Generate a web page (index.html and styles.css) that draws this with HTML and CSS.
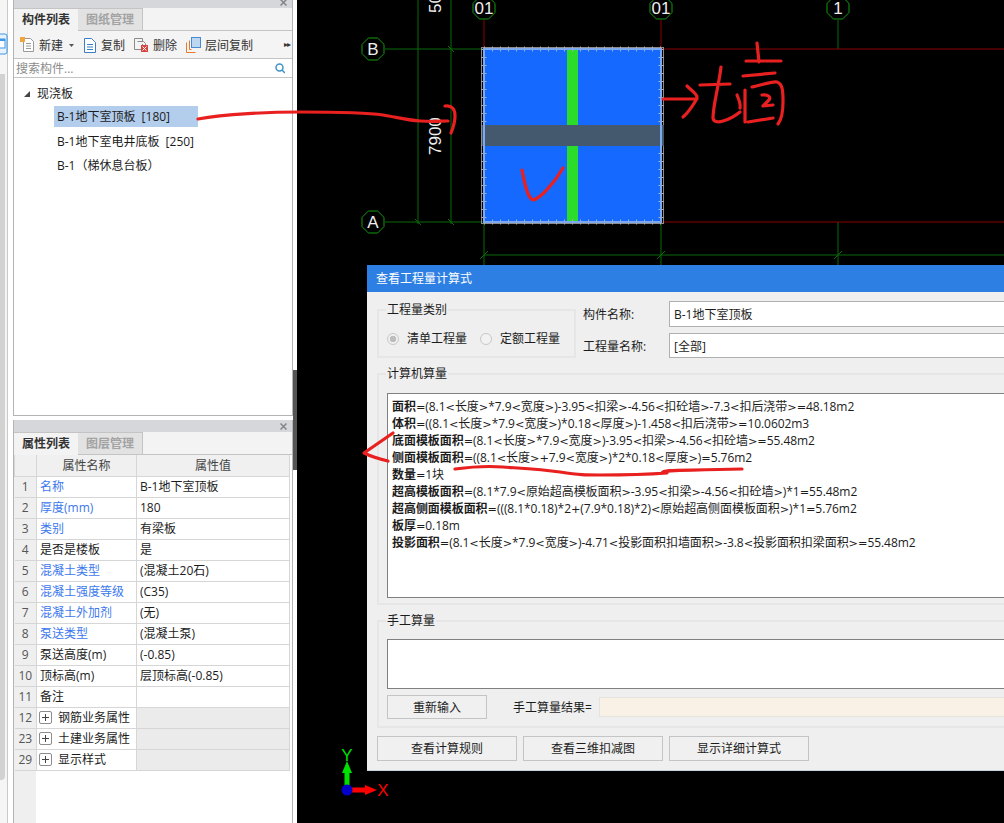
FILE: index.html
```html
<!DOCTYPE html>
<html lang="zh">
<head>
<meta charset="utf-8">
<title>查看工程量计算式</title>
<link rel="stylesheet" href="styles.css">
</head>
<body>
<div class="app">
  <div class="rail">
    <svg class="rail-icon" width="8" height="22" viewBox="0 0 8 22"><rect x="-6" y="1" width="13" height="20" rx="2" class="ri-frame"/><rect x="-2" y="6" width="7" height="9" class="ri-fill"/><rect x="-2" y="6" width="7" height="2" class="ri-bar"/></svg>
    <div class="rail-bar"></div>
  </div>
  <div class="side">
    <section class="panel panel-top">
      <div class="head"><svg class="close" width="7" height="7" viewBox="0 0 7 7"><path d="M.5 .5l6 6M6.500 .5l-6 6"/></svg></div>
      <div class="tabs"><span class="tab on">构件列表</span><span class="tab">图纸管理</span></div>
      <div class="toolbar">
        <span class="tool t-new"><svg width="15" height="16" viewBox="0 0 15 16"><path class="i-page" d="M3.5 1.5h7l3 3v10h-10z"/><path class="i-line" d="M6 6.5h5M6 9h5M6 11.5h5"/><rect class="i-spark" x="0" y="0" width="5" height="5"/></svg>新建<svg class="caret" width="5" height="3" viewBox="0 0 5 3"><path d="M0 0h5L2.500 3z"/></svg></span>
        <span class="tool t-copy"><svg width="12" height="16" viewBox="0 0 12 16"><path class="i-blue" d="M.5 1.500h7l4 4v10h-11z"/><path class="i-blue" d="M3 7.500h6M3 10h6M3 12.500h6"/></svg>复制</span>
        <span class="tool t-del"><svg width="15" height="16" viewBox="0 0 15 16"><path class="i-gray" d="M.5 1.500h8v11h-8z"/><path class="i-gray" d="M3.500 4.500h6l2 2v2"/><rect class="i-red" x="7" y="8" width="7" height="7"/><path class="i-x" d="M8.500 9.500l4 4M12.500 9.500l-4 4"/></svg>删除</span>
        <span class="tool t-floor"><svg width="15" height="16" viewBox="0 0 15 16"><path class="i-orange" d="M.5 15.500v-10M.5 15.500h9M3.500 12.500v-9M3.500 12.500h2"/><rect class="i-bluebox" x="5.500" y=".5" width="9" height="10"/></svg>层间复制</span>
        <span class="more">▸▸</span>
      </div>
      <div class="search"><span>搜索构件...</span><svg width="10" height="11" viewBox="0 0 10 11"><circle class="i-mag" cx="4.500" cy="4.500" r="3.500"/><path class="i-mag" d="M7 7l3 3"/></svg></div>
      <div class="tree">
        <div class="root"><svg class="tri" width="6" height="6" viewBox="0 0 6 6"><path d="M6 0v6H0z"/></svg>现浇板</div>
        <div class="leaf sel">B-1地下室顶板 [180]</div>
        <div class="leaf">B-1地下室电井底板 [250]</div>
        <div class="leaf">B-1（梯休息台板）</div>
      </div>
    </section>
    <section class="panel panel-bottom">
      <div class="head head-b"><svg class="close" width="7" height="7" viewBox="0 0 7 7"><path d="M.5 .5l6 6M6.500 .5l-6 6"/></svg></div>
      <div class="tabs"><span class="tab on">属性列表</span><span class="tab">图层管理</span></div>
      <div class="grid-wrap">
        <table class="props">
          <colgroup><col class="c0"><col class="c1"><col class="c2"></colgroup>
          <thead><tr><th></th><th>属性名称</th><th>属性值</th></tr></thead>
          <tbody>
            <tr><td class="n">1</td><td class="link">名称</td><td>B-1地下室顶板</td></tr>
            <tr><td class="n">2</td><td class="link">厚度(mm)</td><td>180</td></tr>
            <tr><td class="n">3</td><td class="link">类别</td><td>有梁板</td></tr>
            <tr><td class="n">4</td><td>是否是楼板</td><td>是</td></tr>
            <tr><td class="n">5</td><td class="link">混凝土类型</td><td>(混凝土20石)</td></tr>
            <tr><td class="n">6</td><td class="link">混凝土强度等级</td><td>(C35)</td></tr>
            <tr><td class="n">7</td><td class="link">混凝土外加剂</td><td>(无)</td></tr>
            <tr><td class="n">8</td><td class="link">泵送类型</td><td>(混凝土泵)</td></tr>
            <tr><td class="n">9</td><td>泵送高度(m)</td><td>(-0.85)</td></tr>
            <tr><td class="n">10</td><td>顶标高(m)</td><td>层顶标高(-0.85)</td></tr>
            <tr><td class="n">11</td><td>备注</td><td></td></tr>
            <tr class="grp"><td class="n">12</td><td><span class="plus"></span>钢筋业务属性</td><td></td></tr>
            <tr class="grp"><td class="n">23</td><td><span class="plus"></span>土建业务属性</td><td></td></tr>
            <tr class="grp"><td class="n">29</td><td><span class="plus"></span>显示样式</td><td></td></tr>
          </tbody>
        </table>
      </div>
    </section>
  </div>
  <div class="split"></div>
  <main class="canvas">
    <svg class="cad" width="707" height="823" viewBox="297 0 707 823">
      <defs><path id="oct" d="M11 -4.600L11 4.600L4.600 11L-4.600 11L-11 4.600L-11 -4.600L-4.600 -11L4.600 -11Z"/></defs>
      <g class="gl">
        <path d="M418 0V224M451 0V224M385 49H484M385 222H484M484 222V265M661 222V265M838 222V265M838 20V49M484 255H1004"/>
        <path d="M448 46l6 6M415 219l6 6M448 219l6 6M480 259l8 -8M657 259l8 -8M834 259l8 -8"/>
        <use href="#oct" x="373" y="49"/><use href="#oct" x="373" y="222"/>
        <use href="#oct" x="484" y="8"/><use href="#oct" x="661" y="8"/><use href="#oct" x="838" y="8"/>
      </g>
      <path class="rl" d="M484 20V49M661 20V49M661 49H1004M661 222H1004"/>
      <text class="ct" x="373" y="55" text-anchor="middle">B</text>
      <text class="ct" x="373" y="228" text-anchor="middle">A</text>
      <text class="ct" x="484" y="14" text-anchor="middle">01</text>
      <text class="ct" x="661" y="14" text-anchor="middle">01</text>
      <text class="ct" x="838" y="14" text-anchor="middle">1</text>
      <text class="ct" transform="translate(441 155) rotate(-90)">7900</text>
      <text class="ct" transform="translate(441 13) rotate(-90)">5000</text>
      <text class="dim" x="572" y="276" text-anchor="middle">8100</text>
      <text class="dim" x="750" y="276" text-anchor="middle">8100</text>
      <text class="dim" x="927" y="276" text-anchor="middle">8100</text>
      <rect class="slab" x="484" y="49" width="177" height="173"/>
      <rect class="bar-g" x="567" y="49" width="11" height="173"/>
      <rect class="outline" x="481.500" y="47.500" width="182" height="176"/>
      <path class="ticks" d="M484 49H661M484 222H661M484 49V222M661 49V222"/>
      <rect class="bar-s" x="482" y="125" width="182" height="21"/>
      <rect class="sel-edge" x="484" y="49" width="177" height="173"/>
      <path class="ax-g" d="M347 790V772"/><path class="ax-gh" d="M347 761l5 12h-10z"/>
      <path class="ax-r" d="M347 790H366"/><path class="ax-rh" d="M377 790l-12 -5v10z"/>
      <circle class="ax-o" cx="347" cy="790" r="5.500"/>
      <text class="ax-yt" x="347" y="761" text-anchor="middle">Y</text>
      <text class="ax-xt" x="383" y="796" text-anchor="middle">X</text>
    </svg>
    <div class="dialog">
      <div class="d-title">查看工程量计算式</div>
      <div class="d-body">
        <div class="d-top">
          <fieldset class="g g-type">
            <legend>工程量类别</legend>
            <div class="radios">
              <span class="radio"><i class="dot on"></i>清单工程量</span>
              <span class="radio"><i class="dot"></i>定额工程量</span>
            </div>
          </fieldset>
          <div class="fields">
            <div class="field"><label>构件名称:</label><div class="inp">B-1地下室顶板</div></div>
            <div class="field"><label>工程量名称:</label><div class="inp">[全部]</div></div>
          </div>
        </div>
        <fieldset class="g g-calc">
          <legend>计算机算量</legend>
          <div class="formula">
            <div><b>面积</b><i class="m">=</i>(8.1<i class="m">&lt;</i>长度<i class="m">&gt;</i>*7.9<i class="m">&lt;</i>宽度<i class="m">&gt;</i>)-3.95<i class="m">&lt;</i>扣梁<i class="m">&gt;</i>-4.56<i class="m">&lt;</i>扣砼墙<i class="m">&gt;</i>-7.3<i class="m">&lt;</i>扣后浇带<i class="m">&gt;</i><i class="m">=</i>48.18m2</div>
            <div><b>体积</b><i class="m">=</i>((8.1<i class="m">&lt;</i>长度<i class="m">&gt;</i>*7.9<i class="m">&lt;</i>宽度<i class="m">&gt;</i>)*0.18<i class="m">&lt;</i>厚度<i class="m">&gt;</i>)-1.458<i class="m">&lt;</i>扣后浇带<i class="m">&gt;</i><i class="m">=</i>10.0602m3</div>
            <div><b>底面模板面积</b><i class="m">=</i>(8.1<i class="m">&lt;</i>长度<i class="m">&gt;</i>*7.9<i class="m">&lt;</i>宽度<i class="m">&gt;</i>)-3.95<i class="m">&lt;</i>扣梁<i class="m">&gt;</i>-4.56<i class="m">&lt;</i>扣砼墙<i class="m">&gt;</i><i class="m">=</i>55.48m2</div>
            <div><b>侧面模板面积</b><i class="m">=</i>((8.1<i class="m">&lt;</i>长度<i class="m">&gt;</i><i class="m">+</i>7.9<i class="m">&lt;</i>宽度<i class="m">&gt;</i>)*2*0.18<i class="m">&lt;</i>厚度<i class="m">&gt;</i>)<i class="m">=</i>5.76m2</div>
            <div><b>数量</b><i class="m">=</i>1块</div>
            <div><b>超高模板面积</b><i class="m">=</i>(8.1*7.9<i class="m">&lt;</i>原始超高模板面积<i class="m">&gt;</i>-3.95<i class="m">&lt;</i>扣梁<i class="m">&gt;</i>-4.56<i class="m">&lt;</i>扣砼墙<i class="m">&gt;</i>)*1<i class="m">=</i>55.48m2</div>
            <div><b>超高侧面模板面积</b><i class="m">=</i>(((8.1*0.18)*2<i class="m">+</i>(7.9*0.18)*2)<i class="m">&lt;</i>原始超高侧面模板面积<i class="m">&gt;</i>)*1<i class="m">=</i>5.76m2</div>
            <div><b>板厚</b><i class="m">=</i>0.18m</div>
            <div><b>投影面积</b><i class="m">=</i>(8.1<i class="m">&lt;</i>长度<i class="m">&gt;</i>*7.9<i class="m">&lt;</i>宽度<i class="m">&gt;</i>)-4.71<i class="m">&lt;</i>投影面积扣墙面积<i class="m">&gt;</i>-3.8<i class="m">&lt;</i>投影面积扣梁面积<i class="m">&gt;</i><i class="m">=</i>55.48m2</div>
          </div>
        </fieldset>
        <fieldset class="g g-hand">
          <legend>手工算量</legend>
          <div class="hand-box"></div>
          <div class="hand-row">
            <button class="btn btn-re">重新输入</button>
            <span class="hand-label">手工算量结果=</span>
            <div class="hand-res"></div>
          </div>
        </fieldset>
        <div class="d-actions">
          <button class="btn btn-a">查看计算规则</button>
          <button class="btn btn-a">查看三维扣减图</button>
          <button class="btn btn-a">显示详细计算式</button>
        </div>
      </div>
    </div>
  </main>
</div>
<svg class="ink" width="1004" height="823" viewBox="0 0 1004 823">
  <path d="M198 119C225 114 270 112 300 112S370 113 383 115 405 120 420 121 440 121 448 121"/>
  <path d="M445 106C452 105 455 109 455 116S453 128 451 133"/>
  <path d="M522 170C524 180 527 198 533 200 540 199 555 182 563 168"/>
  <path d="M663 99H697M687 86C691 90 697 94 697 97S688 113 683 117"/>
  <path d="M700 85L730 84M721 67C719 85 713 105 713 118 714 126 730 120 740 112M737 95C739 100 741 104 740 108"/>
  <path d="M757 43L759 62M746 61H781M743 76L775 73M752 87C762 85 772 81 777 82 783 84 783 92 783 102S781 120 778 124M745 90V122M748 122L773 118M762 95C768 94 771 97 769 100L763 106 773 105"/>
  <path d="M393 433L364 453C370 456 380 459 388 461"/>
  <path d="M455 469C470 467 490 466 503 467S540 469 560 472 585 475 600 475 640 475 667 473M662 473C664 469 680 471 742 469"/>
</svg>
</body>
</html>
```
FILE: styles.css
```css
* { box-sizing: border-box; }
html, body { margin: 0; padding: 0; background: #000; }
body {
  width: 1004px;
  height: 823px;
  overflow: hidden;
  position: relative;
  font: 12px/17px "Open Sans", "Noto Sans CJK SC", sans-serif;
  color: #1c1c1c;
}
.app { display: flex; width: 1004px; height: 823px; }

/* left rail */
.rail {
  width: 13px;
  flex: none;
  background: #f5f5f5;
  padding-top: 33px;
  display: flex;
  flex-direction: column;
  box-shadow: inset -5px 0 0 #fff, inset -6px 0 0 #c9c9c9;
}
.rail-icon { display: block; }
.ri-frame { fill: #e8f2fc; stroke: #3d96e8; }
.ri-fill { fill: #fff; stroke: #3d96e8; }
.ri-bar { fill: #3d96e8; }
.rail-bar { width: 5px; height: 706px; margin-top: 19px; background: #d2d2d2; border-radius: 0 0 4px 0; }

/* side panels */
.side { width: 280px; flex: none; display: flex; flex-direction: column; background: #fff; }
.panel { border: 1px solid #b4b4b4; border-top: 0; display: flex; flex-direction: column; background: #fff; }
.panel-top { height: 416px; }
.panel-bottom { margin-top: 4px; flex: 1; border-bottom: 0; min-height: 0; }
.head { height: 8px; background: #d5d7da; position: relative; overflow: hidden; flex: none; }
.head-b { height: 12px; }
.close { position: absolute; right: 5px; top: -1px; display: block; }
.head-b .close { top: 3px; }
.close path { fill: none; stroke: #858585; stroke-width: 1.500; }
.tabs { display: flex; height: 23px; flex: none; background: #f3f3f3; border-bottom: 1px solid #c4c4c4; }
.tab {
  width: 65px;
  text-align: center;
  font-weight: 700;
  line-height: 22px;
  color: #a3a3a3;
  background: #e2e2e2;
  border-top: 1px solid #c4c4c4;
  border-right: 1px solid #c4c4c4;
  height: 22px;
}
.tab.on { width: 64px; background: #f3f3f3; color: #333; border-right: 0; box-shadow: 0 1px 0 #f3f3f3; }

.toolbar { height: 28px; flex: none; display: flex; align-items: center; background: #f4f4f4; border-bottom: 1px solid #c4c4c4; padding-left: 6px; color: #333; position: relative; }
.tool { display: flex; align-items: center; line-height: 19px; padding-top: 1px; }
.tool svg { margin: -1px 4px 0 0; flex: none; }
.t-copy svg { margin-right: 5px; }
.t-new { width: 64px; }
.t-copy { width: 50px; }
.t-del { width: 52px; }
.tool .caret { margin: 0 0 0 6px; fill: #555; }
.more { position: absolute; right: 2px; top: 5px; font: 8px/17px "DejaVu Sans", sans-serif; color: #333; letter-spacing: -1px; }
.i-page { fill: #fff; stroke: #9a9a9a; }
.i-line { fill: none; stroke: #9a9a9a; }
.i-spark { fill: #f2a53b; }
.i-blue { fill: #fff; stroke: #3a7fc8; }
.i-gray { fill: #f4f4f4; stroke: #8a8a8a; }
.i-red { fill: #d8433f; }
.i-x { stroke: #fff; fill: none; }
.i-orange { fill: none; stroke: #e8792c; }
.i-bluebox { fill: #bcd7f2; stroke: #4a8ad0; }
.i-mag { fill: none; stroke: #3f93c9; stroke-width: 1.500; }

.search { height: 19px; flex: none; display: flex; align-items: center; justify-content: space-between; padding: 0 7px 0 2px; border-bottom: 1px solid #c4c4c4; color: #8c8c8c; background: #fff; }
.tree { flex: 1; padding-top: 7px; }
.root { display: flex; align-items: center; height: 17px; padding-left: 10px; margin-bottom: 4px; }
.tri { margin-right: 7px; fill: #444; }
.leaf { height: 24.500px; line-height: 21px; padding-left: 3px; margin-left: 40px; word-spacing: 3px; }
.leaf.sel { width: 144px; height: 21px; margin-bottom: 3.500px; background: #b3cdec; }

/* property grid */
.grid-wrap { flex: 1; background: linear-gradient(90deg, #efefef 22px, #fff 22px); padding-right: 3px; }
.props { border-collapse: collapse; table-layout: fixed; width: 275px; }
.c0 { width: 22px; }
.c1 { width: 100px; }
.c2 { width: 153px; }
.props th, .props td { height: 21px; padding: 0 0 0 3px; border: 1px solid #d6d6d6; font-weight: 400; white-space: nowrap; overflow: hidden; line-height: 17px; }
.props th { background: #f0f0f0; text-align: center; padding: 0; color: #444; border-top: 0; }
.props .n { background: #efefef; text-align: center; padding: 0; color: #555; border-left: 0; }
.link { color: #3c78ee; }
.grp td:last-child { background: #ebebeb; }
.plus { display: inline-block; width: 13px; height: 13px; margin: 0 6px 0 -1px; vertical-align: -2px; border: 1px solid #8d8d8d; border-radius: 2px; background: linear-gradient(#444, #444) center / 7px 1px no-repeat, linear-gradient(#444, #444) center / 1px 7px no-repeat, #fff; }

.split { width: 4px; flex: none; background: #fff; position: relative; }
.split::after { content: ""; position: absolute; left: 0; top: 370px; width: 4px; height: 100px; background: #555; }

/* canvas */
.canvas { flex: 1; position: relative; background: #000; overflow: hidden; }
.cad { position: absolute; left: 0; top: 0; }
.gl { fill: none; stroke: #0b6b0b; }
.gl use { stroke: #129a12; }
.rl { fill: none; stroke: #8b0000; }
.ct { fill: #eee; font: 17px "Liberation Sans", sans-serif; }
.dim { fill: #ddd; font: 15px "Liberation Sans", sans-serif; }
.slab { fill: #1569ff; }
.bar-g { fill: #2bdc2b; }
.bar-s { fill: #44586e; }
.sel-edge { fill: none; stroke: #7fa9ee; stroke-width: 2; }
.outline { fill: none; stroke: #8c8c8c; }
.ticks { fill: none; stroke: #b0b0b0; stroke-width: 5; stroke-dasharray: 1 7; }
.ax-g { stroke: #00e000; stroke-width: 5; fill: none; }
.ax-gh { fill: #00e000; }
.ax-r { stroke: #f00; stroke-width: 5; fill: none; }
.ax-rh { fill: #f00; }
.ax-o { fill: #0000c8; }
.ax-yt { fill: #00e000; font: 17px "Liberation Sans Narrow", "Liberation Sans", sans-serif; }
.ax-xt { fill: #f00; font: 17px "Liberation Sans Narrow", "Liberation Sans", sans-serif; }

/* dialog */
.dialog { position: absolute; left: 70px; top: 265px; width: 720px; height: 506px; background: #efefef; border-bottom: 1px solid #c6d3e0; }
.d-title { height: 27px; background: #2d7fe3; color: #fff; padding-left: 9px; line-height: 28px; }
.d-body { padding: 9px 10px 0; }
.d-top { display: flex; height: 57px; }
.g { margin: 0; padding: 0; min-width: 0; border: 2px solid #e6e6e6; }
.g legend { margin-left: -1px; padding: 0 1px; line-height: 18px; height: 18px; }
.g-type { width: 199px; height: 57px; padding-left: 8px; }
.radios { display: flex; align-items: center; height: 17px; margin-top: 11px; }
.radio { display: flex; align-items: center; width: 93px; }
.dot { width: 12px; height: 12px; border-radius: 50%; border: 1px solid #c8c8c8; margin-right: 8px; background: #f2f2f2; flex: none; }
.dot.on { background: radial-gradient(circle, #bdbdbd 3px, #efefef 3.500px); }
.fields { margin-left: 7px; display: flex; flex-direction: column; gap: 6px; flex: 1; }
.field { display: flex; align-items: center; height: 25.500px; }
.field label { width: 86px; flex: none; padding-top: 2px; }
.inp { flex: 1; height: 100%; background: #fff; border: 1px solid #b0b0b0; padding-left: 4px; line-height: 25px; }
.g-calc { margin-top: 6px; height: 241px; padding: 10px 0 0 8px; }
.g-calc legend { padding-top: 1px; height: 19px; }
.formula { height: 205px; background: #fff; border: 1px solid #808080; border-right: 0; padding: 4px 0 0 4px; white-space: nowrap; letter-spacing: -0.06px; }
.formula div { height: 17px; line-height: 17px; }
.m { font: 11.300px/17px "DejaVu Sans", sans-serif; }
.g-hand { margin-top: 7px; height: 116px; padding: 9px 0 0 8px; }
.hand-box { height: 50px; background: #fff; border: 1px solid #808080; }
.hand-row { display: flex; align-items: center; margin-top: 6px; height: 24px; }
.btn { font: inherit; color: inherit; background: #f0f0f0; border: 1px solid #c4c4c4; padding: 0; }
.btn-re { width: 100px; height: 24px; }
.hand-label { margin-left: 26px; width: 86px; flex: none; }
.hand-res { flex: 1; height: 20px; background: #f9f0e6; border: 1px solid #e6e2dc; }
.d-actions { display: flex; gap: 6px; margin-top: 8px; }
.btn-a { width: 140px; height: 25px; }

/* hand-drawn annotation above everything */
.ink { position: absolute; left: 0; top: 0; pointer-events: none; }
.ink path { fill: none; stroke: #e8201f; stroke-width: 3.200; stroke-linecap: round; stroke-linejoin: round; }
```
